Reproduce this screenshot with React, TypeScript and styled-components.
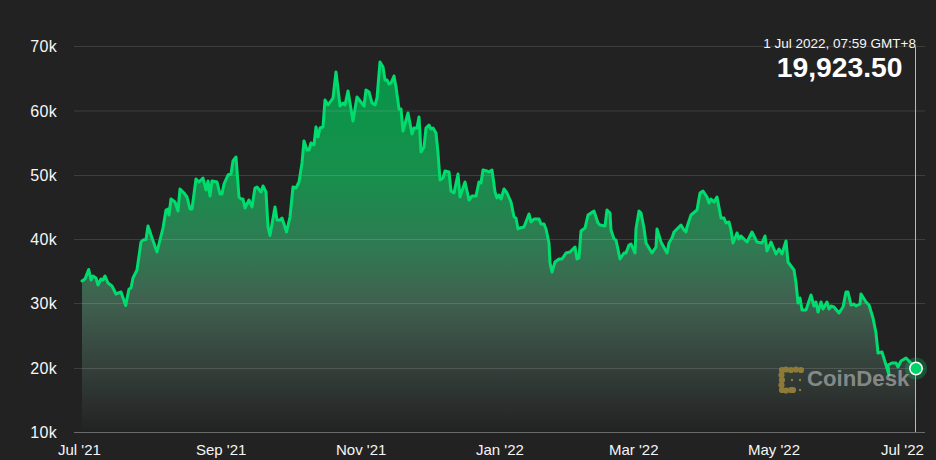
import React from "react";
import styled, { createGlobalStyle } from "styled-components";

const Global = createGlobalStyle`
  html, body { margin: 0; padding: 0; background: #222222; }
  body { font-family: "Liberation Sans", Arial, sans-serif; }
`;

const Chart = styled.div`
  display: grid;
  grid-template-columns: 74px 862px;
  grid-template-rows: 437px 23px;
  width: 936px;
  height: 460px;
  overflow: hidden;
  background: #222222;
  color: #f6f6f6;
`;

const YAxis = styled.div`
  display: flex;
  flex-direction: column;
  padding-top: 15.2px;
`;

const YTick = styled.div`
  flex: 0 0 64.27px;
  display: flex;
  align-items: center;
  justify-content: flex-end;
  padding-right: 17px;
  font-size: 16px;
  letter-spacing: 0.3px;
`;

const Plot = styled.div`
  position: relative;
  width: 862px;
  height: 437px;
`;

const PlotSvg = styled.svg`
  display: block;
`;

const Readout = styled.div`
  position: absolute;
  top: 36px;
  right: 20px;
  display: flex;
  flex-direction: column;
  align-items: center;
`;

const ReadoutDate = styled.div`
  font-size: 13.5px;
  line-height: 16px;
  white-space: nowrap;
`;

const ReadoutPrice = styled.div`
  font-size: 28.3px;
  line-height: 30px;
  font-weight: 700;
  color: #ffffff;
`;

const Watermark = styled.div`
  position: absolute;
  left: 703px;
  top: 363px;
  display: flex;
  align-items: center;
  gap: 1px;
`;

const WatermarkText = styled.span`
  font-size: 22.2px;
  line-height: 32px;
  font-weight: 700;
  color: rgba(190, 190, 190, 0.62);
`;

const XAxis = styled.div`
  grid-column: 1 / -1;
  display: flex;
  align-items: center;
  padding-left: 58px;
  padding-top: 2px;
  box-sizing: border-box;
`;

const XTick = styled.div<{ $w: number }>`
  flex: 0 0 ${(p) => p.$w}px;
  font-size: 15px;
  line-height: 18px;
  white-space: nowrap;
`;

const pts: [number, number][] = [
  [82,281],[85,279],[88.7,269.5],[91,280],[93,276],[96,278],[98,285],[101,279],[103,280],[105,276],[108,283],[112,286],[116,294],[121,292],[125.7,305.5],[129,289],[131,288],[133,278],[137,270],[141,242],[143,240],[146,239.5],[148,226],[152,238],[157,252],[163,228],
  [166,210],[168,209],[169,215],[171,199],[175,202],[178,211],[180,189],[184,193],[187,197],[190,209],[192,209],[196,179],[199,182],[203,178],[206,190],[208,181],[210,196],[212,181],[217,182],[220,194],[222,194],[224,184],[228,175],[231,174],[233,161],[236,157],[239,197],[241,199],[243,199],[245,208],[249,200],[252,207],[255,188],[257,187],[261,192],[263,186],[266,192],[268,227],[270,235.5],[275,207],[277,220],[280,220],[282,218],[286.5,232],[290,217],[293,187],[296,188],[299,182],[302,163],[304,141],[307,150],[309,150],[311,143],
  [314,145],[316,127],[318,137],[320,128],[323,127],[325,100],[328,105],[333,98],[336,72],[340,106],[343,103],[345,105],[348,91],[353,121],[357,97],[364,106],[366,90],[369,92],[372,103],[375,105],[377,98],[380,62],[383,67],[385,80],[387,80],[389,84],[391,83],[394,76],[396,87],[399,109],[401,109],[403,131],[408,113],[412,134],[414,128],[417,128],[419,117],[421,152],[424,147],[426,128],[429,125],[431,129],[433,128],[436,133],[438,153],[440,180],[443,178],[445,171],[449,172],[451,191],[454,193],[458,174],[460,197],[465,182],[469,200],[472,196],[476,196],[479,182],[481,183],[483,170],[487,171],[489,172],[492,170],[495,192],[497,198],[499,195],[501,199],[504,189],[507,193],[511,202],[514,217],[516,218],[518,229],[520,228],[524,227],[529,214],[531,222],[534,219],[539,219],[541,224],[544,224],[546,229],
  [549,243],[550,263],[552,272],[555,262],[559,259],[562,259],[566,253],[570,252],[572,250],[575,247],[577,259],[579,258],[581,231],[585,228],[588,215],[594,211],[598,223],[600,225],[605,226],[607,210],[610,213],[611,230],[614,239],[616,240],[620,259],[624,253],[626,253],[629,245],[631,244],[635,253],[636,229],[639,211],[641,213],[644,228],[646,243],[652,253],[656,247],[657,229],[661,242],[667,253],[669,243],[672,238],[674,232],[677,229],[681,225],[684,230],[686,232],[687,227],[691,215],[697,210],[700,193],[703,191],[707,197],[709,203],[711,199],[714,202],[717,197],[721,218],[724,218],[726,223],[729,222],[731,230],[733,243],[737,233],[739,239],[741,236],[747,242],[752,232],[757,242],[762,243],[765,236],[767,251],[771,242],[776,254],[779,249],[782,254],[786,241],[788,262],[794,270],[796,283],[798,303],[800,298],[802,310],[806,310],[811,295],[814,306],[816,302],[818,312],[821,302],[823,309],[827,302],[829,309],[831,306],[834,307],[839,313],[843,307],[846,292],[848,292],[851,305],[854,304],[856,306],[860,304],[861,294],[866,302],[869,305],[873,318],[876,333],[878,353],[882,352],[886,365],[889,375],[888,365],[892,363],[896,363],[898,367],[901,361],[906,358],[911,363],[916,368.5],
];

const line = pts.map((p) => p.join(",")).join(" ");
const area = `82,432.5 ${line} 916,432.5`;
const gridYs = [46.5, 111, 175.5, 239.5, 303.5, 368.5];
const yTicks = ["70k", "60k", "50k", "40k", "30k", "20k", "10k"];
const xTicks: [string, number][] = [
  ["Jul '21", 138],
  ["Sep '21", 140],
  ["Nov '21", 140],
  ["Jan '22", 133],
  ["Mar '22", 139],
  ["May '22", 133],
  ["Jul '22", 60],
];

const LogoMark = () => (
  <svg width="29" height="29" viewBox="0 0 29 29" fill="#8f7b38">
    {[[5,5],[9,4.5],[14,5],[19,4.5],[24,5],[4.5,10],[5,15],[4.5,20],[5,25],[9,25.5],[14,25],[16,25]].map(([x, y], i) => (
      <circle key={i} cx={x} cy={y} r="3.1" />
    ))}
    <circle cx="15" cy="15" r="1.2" />
    <circle cx="23" cy="15" r="1.2" />
    <circle cx="23" cy="25" r="1.2" />
  </svg>
);

export default function App() {
  return (
    <>
      <Global />
      <Chart>
        <YAxis>
          {yTicks.map((t) => (
            <YTick key={t}>{t}</YTick>
          ))}
        </YAxis>
        <Plot>
          <PlotSvg width="862" height="437" viewBox="74 0 862 437">
            <defs>
              <linearGradient id="fillGrad" gradientUnits="userSpaceOnUse" x1="0" y1="62" x2="0" y2="432">
                <stop offset="0" stopColor="#079548" />
                <stop offset="0.3" stopColor="#16904c" />
                <stop offset="0.5" stopColor="#2f7a52" />
                <stop offset="0.65" stopColor="#40604f" />
                <stop offset="0.83" stopColor="#343f3a" />
                <stop offset="1" stopColor="#222222" />
              </linearGradient>
            </defs>
            <polygon points={area} fill="url(#fillGrad)" />
            {gridYs.map((y) => (
              <line key={y} x1="74" x2="925" y1={y} y2={y} stroke="rgba(255,255,255,0.13)" strokeWidth="1" />
            ))}
            <line x1="74" x2="925" y1="432.5" y2="432.5" stroke="#6a6a6a" strokeWidth="1" />
            <line x1="915.5" x2="915.5" y1="47" y2="432" stroke="#b9b9b9" strokeWidth="1" />
            <polyline points={line} fill="none" stroke="#00dc6e" strokeWidth="3" strokeLinejoin="round" strokeLinecap="round" />
            <circle cx="916" cy="368.5" r="11" fill="rgba(0,217,108,0.26)" />
            <circle cx="916" cy="368.5" r="6.2" fill="#00d468" stroke="#ffffff" strokeWidth="1.5" />
          </PlotSvg>
          <Readout>
            <ReadoutDate>1 Jul 2022, 07:59 GMT+8</ReadoutDate>
            <ReadoutPrice>19,923.50</ReadoutPrice>
          </Readout>
          <Watermark>
            <LogoMark />
            <WatermarkText>CoinDesk</WatermarkText>
          </Watermark>
        </Plot>
        <XAxis>
          {xTicks.map(([t, w]) => (
            <XTick key={t} $w={w}>{t}</XTick>
          ))}
        </XAxis>
      </Chart>
    </>
  );
}
